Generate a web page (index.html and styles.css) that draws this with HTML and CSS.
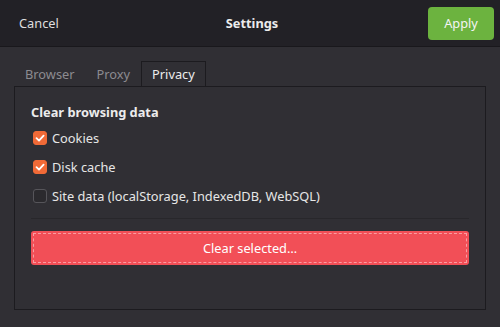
FILE: index.html
```html
<!DOCTYPE html>
<html lang="en">
<head>
  <meta charset="UTF-8">
  <title>Settings</title>
  <link rel="stylesheet" href="styles.css">
</head>
<body>

  <div class="header">
    <button class="cancel-btn">Cancel</button>
    <div class="title">Settings</div>
    <button class="apply-btn">Apply</button>
  </div>

  <div class="tabs">
    <div class="tab">Browser</div>
    <div class="tab">Proxy</div>
    <div class="tab active">Privacy</div>
  </div>

  <div class="page">
    <div class="section-title">Clear browsing data</div>

    <label class="check-row">
      <span class="box checked">
        <svg viewBox="0 0 14 14" width="14" height="14"><path d="M3.5 7.2 L6 9.6 L10.6 4.6" fill="none" stroke="#fff" stroke-width="1.8" stroke-linecap="round" stroke-linejoin="round"/></svg>
      </span>
      Cookies
    </label>
    <label class="check-row">
      <span class="box checked">
        <svg viewBox="0 0 14 14" width="14" height="14"><path d="M3.5 7.2 L6 9.6 L10.6 4.6" fill="none" stroke="#fff" stroke-width="1.8" stroke-linecap="round" stroke-linejoin="round"/></svg>
      </span>
      Disk cache
    </label>
    <label class="check-row">
      <span class="box"></span>
      Site data (localStorage, IndexedDB, WebSQL)
    </label>

    <div class="separator"></div>

    <button class="clear-btn"><span>Clear selected…</span></button>
  </div>

</body>
</html>
```

FILE: styles.css
```css
body {
  margin: 0;
  width: 500px;
  height: 327px;
  overflow: hidden;
  background-color: #302f34;
  font-family: "Noto Sans", "Open Sans", sans-serif;
  font-size: 12.8px;
  color: #e6e6e6;
}

button {
  font-family: inherit;
  font-size: 12.8px;
  border: none;
  background: none;
  color: inherit;
  cursor: pointer;
}

.header {
  height: 46px;
  display: grid;
  grid-template-columns: 1fr auto 1fr;
  align-items: center;
  padding: 0 6px 0 10px;
  background-color: #222126;
  border-bottom: 1px solid #19181c;
}

.cancel-btn {
  justify-self: start;
  padding: 6px 9px;
  color: #dedede;
}

.title {
  font-weight: bold;
  color: #ececec;
}

.apply-btn {
  justify-self: end;
  width: 66px;
  height: 33px;
  background-color: #6cb33f;
  border-radius: 4px;
  color: #f4f4f4;
}

.tabs {
  display: flex;
  margin-top: 14px;
  padding-left: 14px;
}

.tab {
  height: 24px;
  padding: 0 10px;
  line-height: 24px;
  color: #8c8b90;
  border: 1px solid transparent;
  border-bottom: none;
}

.tab.active {
  color: #ececec;
  border-color: #1c1b1f;
  position: relative;
  top: 1px;
  margin-top: -1px;
  background-color: #302f34;
}

.page {
  margin: 0 14px;
  height: 224px;
  box-sizing: border-box;
  padding: 17px 16px 0 16px;
  border: 1px solid #1c1b1f;
}

.section-title {
  font-weight: bold;
  line-height: 17px;
  margin-bottom: 2px;
  color: #ececec;
}

.check-row {
  display: flex;
  align-items: center;
  gap: 5px;
  height: 29px;
  margin-left: 2px;
}

.box {
  width: 14px;
  height: 14px;
  box-sizing: border-box;
  border: 1px solid #56555a;
  border-radius: 3px;
  background-color: #2b2a2e;
  display: flex;
}

.box.checked {
  background-color: #f06a37;
  border-color: #f06a37;
}

.box svg {
  margin: -1px;
}

.separator {
  height: 1px;
  background-color: #28272b;
  margin-top: 8px;
  margin-bottom: 12px;
}

.clear-btn {
  display: block;
  width: 100%;
  height: 34px;
  padding: 2px;
  background-color: #f24f57;
  border-radius: 3px;
  color: #fff;
}

.clear-btn span {
  display: flex;
  align-items: center;
  justify-content: center;
  height: 100%;
  border: 1px dashed rgba(255, 255, 255, 0.45);
  box-sizing: border-box;
}
```
